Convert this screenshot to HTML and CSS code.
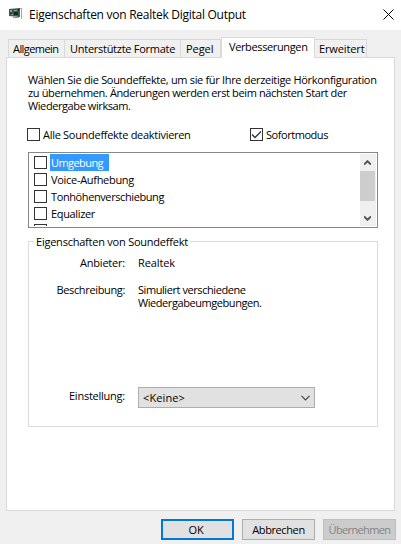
FILE: index.html
```html
<!DOCTYPE html>
<html lang="de">
<head>
<meta charset="utf-8">
<title>Eigenschaften von Realtek Digital Output</title>
<link rel="stylesheet" href="styles.css">
</head>
<body>
<header class="titlebar">
  <svg class="device" width="14" height="12" viewBox="0 0 14 12">
    <path d="M0 1l11 -1v9l-11-1z" fill="#3b5b4a"/>
    <path d="M1 2h2v2H1zM5 2h3v1H5zM2 6h2v1H2z" fill="#82a18d"/>
    <path d="M5 4h4v3H5zM1 5h2v1H1zM9 1h1v2H9z" fill="#142820"/>
    <path d="M4 9h6v1H4z" fill="#89a28c"/>
    <path d="M12.5 0v11M11 .5h2" stroke="#a5aaa8" fill="none"/>
  </svg>
  <h1 class="title">Eigenschaften von Realtek Digital Output</h1>
  <svg class="close" width="11" height="11" viewBox="0 0 11 11"><path d="M.5.5l10 10M10.500.5l-10 10" stroke="#000" fill="none"/></svg>
</header>
<nav class="tabs">
  <span class="tab tab-general">Allgemein</span>
  <span class="tab tab-formats">Unterstützte Formate</span>
  <span class="tab tab-level">Pegel</span>
  <span class="tab tab-active">Verbesserungen</span>
  <span class="tab tab-advanced">Erweitert</span>
</nav>
<main class="panel">
  <p class="intro"><span class="l1">Wählen Sie die Soundeffekte, um sie für Ihre derzeitige Hörkonfiguration</span><br><span class="l2">zu übernehmen. Änderungen werden erst beim nächsten Start der</span><br><span class="l3">Wiedergabe wirksam.</span></p>
  <div class="options">
    <label class="option option-all"><i class="box"></i><span class="t-all">Alle Soundeffekte deaktivieren</span></label>
    <label class="option"><i class="box"><svg width="11" height="11" viewBox="0 0 11 11"><path d="M1 5.500l3 3 6-6" stroke="#333" stroke-width="1.300" fill="none"/></svg></i><span class="t-now">Sofortmodus</span></label>
  </div>
  <div class="list">
    <div class="items">
      <div class="item"><i class="box"></i><span class="name selected">Umgebung</span></div>
      <div class="item"><i class="box"></i><span class="name n2">Voice-Aufhebung</span></div>
      <div class="item"><i class="box"></i><span class="name n3">Tonhöhenverschiebung</span></div>
      <div class="item"><i class="box"></i><span class="name n4">Equalizer</span></div>
      <div class="item"><i class="box"></i></div>
    </div>
    <div class="scrollbar">
      <svg class="up" width="7" height="6" viewBox="0 0 7 6"><path d="M0 4.500L3.500 1.200 7 4.500" stroke="#555" stroke-width="2" fill="none"/></svg>
      <div class="thumb"></div>
      <svg class="down" width="7" height="6" viewBox="0 0 7 6"><path d="M0 1.500L3.500 4.800 7 1.500" stroke="#555" stroke-width="2" fill="none"/></svg>
    </div>
  </div>
  <fieldset class="group">
    <legend class="legend">Eigenschaften von Soundeffekt</legend>
    <dl class="fields">
      <dt class="f1">Anbieter:</dt><dd class="v1">Realtek</dd>
      <dt class="f2">Beschreibung:</dt><dd><span class="v2">Simuliert verschiedene</span><br><span class="v3">Wiedergabeumgebungen.</span></dd>
      <dt class="f3">Einstellung:</dt>
      <dd><div class="select"><span class="v4">&lt;Keine&gt;</span><svg width="9" height="6" viewBox="0 0 9 6"><path d="M.5.8l4 4 4-4" stroke="#444" stroke-width="1.200" fill="none"/></svg></div></dd>
    </dl>
  </fieldset>
</main>
<footer class="actions">
  <button class="button primary">OK</button>
  <button class="button cancel">Abbrechen</button>
  <button class="button apply" disabled>Übernehmen</button>
</footer>
</body>
</html>
```
FILE: styles.css
```css
* { box-sizing: border-box; margin: 0; padding: 0; }
body {
  width: 401px; height: 544px; overflow: hidden; background: #f0f0f0; color: #000;
  font: 11px/13px "Open Sans", sans-serif; white-space: nowrap;
}
svg { display: block; flex: none; }
.titlebar { display: flex; height: 30px; background: #fff; padding-left: 9px; }
.device { margin-top: 8px; }
.title { width: 354px; margin-left: 6px; font-size: 12px; font-weight: 400; line-height: 30px; letter-spacing: -0.27px; }
.close { margin-top: 9px; }
.tabs { display: flex; align-items: flex-end; height: 27px; padding-left: 8px; }
.tab { height: 18px; border: 1px solid #d9d9d9; border-width: 1px 1px 0 0; padding: 2px 0 0 5px; }
.tab-general { width: 57px; border-left-width: 1px; padding-left: 4px; letter-spacing: -0.56px; }
.tab-formats { width: 116px; letter-spacing: -0.27px; }
.tab-level { width: 40px; letter-spacing: -0.05px; }
.tab-active { position: relative; width: 94px; height: 21px; margin-bottom: -1px; border-left-width: 1px; background: #fff; padding: 2px 0 0 7px; letter-spacing: -0.37px; }
.tab-advanced { width: 52px; padding-left: 4px; letter-spacing: -0.12px; }
.panel { width: 389px; height: 454px; margin-left: 6px; border: 1px solid #d9d9d9; background: #fff; padding: 16px 0 0 21px; }
.intro { margin-top: -1px; }
.l1 { letter-spacing: -0.32px; }
.l2 { letter-spacing: -0.37px; }
.l3 { letter-spacing: -0.41px; }
.options { display: flex; margin-top: 16px; height: 13px; }
.option { display: flex; }
.option-all { width: 223px; margin-left: -1px; }
.t-all { letter-spacing: -0.29px; }
.t-now { letter-spacing: -0.45px; }
.box { display: block; flex: none; width: 13px; height: 13px; border: 1px solid #333; background: #fff; }
.option .box { margin-right: 3px; }
.list { display: flex; width: 350px; height: 76px; margin-top: 11px; border: 1px solid #828790; padding: 1px; }
.items { flex: 1; overflow: hidden; padding-left: 4px; height: 72px; }
.item { display: flex; height: 17px; padding-top: 2px; }
.name { height: 17px; margin-top: -2px; margin-left: 3px; padding: 2px 2px 0 1px; line-height: 13px; }
.selected { width: 59px; background: #3399ff; color: #fff; letter-spacing: -0.57px; }
.n2 { letter-spacing: -0.3px; }
.n3 { letter-spacing: -0.4px; }
.n4 { letter-spacing: -0.34px; }
.scrollbar { width: 16px; background: #f0f0f0; }
.up { margin: 6px 0 0 4px; }
.thumb { width: 15px; height: 30px; margin-top: 5px; background: #cdcdcd; }
.down { margin: 14px 0 0 4px; }
.group { position: relative; width: 350px; height: 186px; margin-top: 13px; border: 1px solid #dcdcdc; }
.legend { position: absolute; left: 5px; top: -7px; background: #fff; padding: 0 2px; letter-spacing: -0.23px; }
.fields { display: grid; grid-template-columns: 96px 177px; grid-template-rows: 27px 104px 21px; column-gap: 13px; padding-top: 14px; }
.fields dt { text-align: right; }
.f1 { letter-spacing: -0.21px; }
.v1 { letter-spacing: -0.1px; }
.f2 { letter-spacing: -0.35px; }
.v2, .v3 { letter-spacing: -0.43px; }
.f3 { padding-top: 2px; letter-spacing: -0.24px; }
.v4 { letter-spacing: 0.1px; }
.select { display: flex; align-items: center; justify-content: space-between; width: 177px; height: 21px; border: 1px solid #adadad; background: #e1e1e1; padding: 1px 4px; }
.actions { display: flex; gap: 8px; margin: 8px 0 0 161px; }
.button { width: 73px; height: 21px; border: 1px solid #adadad; background: #e1e1e1; color: #000; font: inherit; }
.primary { border: 2px solid #0078d7; letter-spacing: -0.15px; padding-right: 3px; }
.cancel { letter-spacing: -0.39px; }
.apply { border-color: #bfbfbf; background: #ccc; color: #838383; letter-spacing: -0.62px; }
```
